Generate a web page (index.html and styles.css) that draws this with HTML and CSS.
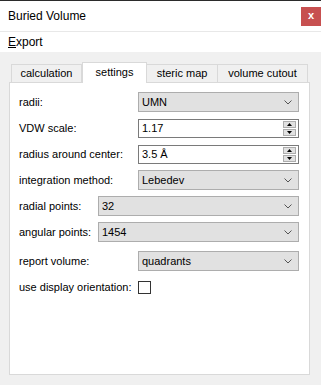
FILE: index.html
```html
<!DOCTYPE html>
<html lang="en">

<head>
    <meta charset="UTF-8">
    <meta name="viewport" content="width=device-width, initial-scale=1.0">
    <link rel="stylesheet" href="styles.css">
</head>

<body>
    <div class="window">
        <div class="titlebar">
            <span class="title">Buried Volume</span>
            <div class="close">x</div>
        </div>
        <div class="menubar">
            <span class="menu"><u>E</u>xport</span>
        </div>
        <div class="main">
            <div class="tabs">
                <div class="tab tab-calc">calculation</div>
                <div class="tab tab-settings active">settings</div>
                <div class="tab tab-steric">steric map</div>
                <div class="tab tab-cutout">volume cutout</div>
            </div>
            <div class="panel">
                <div class="form">
                    <div class="row">
                        <span class="label">radii:</span>
                        <div class="combo"><span>UMN</span>
                            <svg class="chev" width="8" height="5" viewBox="0 0 8 5"><path d="M0.5 0.5 L4 4 L7.5 0.5" fill="none" stroke="#555" stroke-width="1"/></svg>
                        </div>
                    </div>
                    <div class="row">
                        <span class="label">VDW scale:</span>
                        <div class="spin"><span>1.17</span>
                            <div class="spin-btns">
                                <div class="spin-btn"><svg width="7" height="4" viewBox="0 0 7 4"><path d="M0 4 L3.5 0 L7 4 Z" fill="#000"/></svg></div>
                                <div class="spin-btn"><svg width="7" height="4" viewBox="0 0 7 4"><path d="M0 0 L3.5 4 L7 0 Z" fill="#000"/></svg></div>
                            </div>
                        </div>
                    </div>
                    <div class="row">
                        <span class="label">radius around center:</span>
                        <div class="spin"><span>3.5 Å</span>
                            <div class="spin-btns">
                                <div class="spin-btn"><svg width="7" height="4" viewBox="0 0 7 4"><path d="M0 4 L3.5 0 L7 4 Z" fill="#000"/></svg></div>
                                <div class="spin-btn"><svg width="7" height="4" viewBox="0 0 7 4"><path d="M0 0 L3.5 4 L7 0 Z" fill="#000"/></svg></div>
                            </div>
                        </div>
                    </div>
                    <div class="row">
                        <span class="label">integration method:</span>
                        <div class="combo"><span>Lebedev</span>
                            <svg class="chev" width="8" height="5" viewBox="0 0 8 5"><path d="M0.5 0.5 L4 4 L7.5 0.5" fill="none" stroke="#555" stroke-width="1"/></svg>
                        </div>
                    </div>
                    <div class="row">
                        <span class="label short">radial points:</span>
                        <div class="combo"><span>32</span>
                            <svg class="chev" width="8" height="5" viewBox="0 0 8 5"><path d="M0.5 0.5 L4 4 L7.5 0.5" fill="none" stroke="#555" stroke-width="1"/></svg>
                        </div>
                    </div>
                    <div class="row">
                        <span class="label short">angular points:</span>
                        <div class="combo"><span>1454</span>
                            <svg class="chev" width="8" height="5" viewBox="0 0 8 5"><path d="M0.5 0.5 L4 4 L7.5 0.5" fill="none" stroke="#555" stroke-width="1"/></svg>
                        </div>
                    </div>
                    <div class="row spaced">
                        <span class="label">report volume:</span>
                        <div class="combo"><span>quadrants</span>
                            <svg class="chev" width="8" height="5" viewBox="0 0 8 5"><path d="M0.5 0.5 L4 4 L7.5 0.5" fill="none" stroke="#555" stroke-width="1"/></svg>
                        </div>
                    </div>
                    <div class="row">
                        <span class="label">use display orientation:</span>
                        <div class="check"></div>
                    </div>
                </div>
            </div>
        </div>
    </div>
</body>

</html>
```

FILE: styles.css
```css
body {
    margin: 0;
    font-family: "Liberation Sans", Arial, sans-serif;
    font-size: 11px;
    color: #000;
}

.window {
    width: 321px;
    height: 385px;
    background-color: #f0f0f0;
    border-top: 1px solid #2b2b2b;
    box-sizing: border-box;
}

.titlebar {
    height: 30px;
    background-color: #fff;
    display: flex;
    align-items: center;
    justify-content: space-between;
    padding-left: 8px;
    border-bottom: 1px solid #e8e8e8;
}

.title {
    font-size: 12px;
}

.close {
    width: 20px;
    height: 19px;
    background-color: #c75050;
    color: #fff;
    font-weight: bold;
    font-size: 11px;
    display: flex;
    align-items: center;
    justify-content: center;
    line-height: 1;
    padding-bottom: 2px;
    box-sizing: border-box;
}

.menubar {
    height: 20px;
    background-color: #fff;
    display: flex;
    align-items: center;
    padding-left: 8px;
    font-size: 12px;
}

.menu u {
    text-decoration-thickness: 1px;
}

.main {
    padding: 10px 0 0 9px;
}

.tabs {
    display: flex;
    align-items: flex-end;
    height: 20px;
    padding-left: 2px;
}

.tab {
    height: 18px;
    box-sizing: border-box;
    border: 1px solid #d9d9d9;
    border-bottom: none;
    background-color: #f0f0f0;
    display: flex;
    align-items: center;
    justify-content: center;
    padding-bottom: 1px;
    white-space: nowrap;
}

.tab-calc {
    width: 71px;
}

.tab-settings {
    width: 65px;
}

.tab-steric {
    width: 71px;
    border-left: none;
}

.tab-cutout {
    width: 90px;
    border-left: none;
}

.tab.active {
    height: 21px;
    margin-bottom: -1px;
    background-color: #fff;
    position: relative;
    z-index: 1;
    padding-bottom: 3px;
}

.panel {
    width: 301px;
    height: 293px;
    box-sizing: border-box;
    border: 1px solid #d9d9d9;
    background-color: #fff;
}

.form {
    display: flex;
    flex-direction: column;
    gap: 6px;
    padding: 9px 10px 0 9px;
}

.row {
    display: flex;
    align-items: center;
    height: 20px;
}

.row.spaced {
    margin-top: 3px;
}

.label {
    width: 119px;
    flex-shrink: 0;
    white-space: nowrap;
}

.label.short {
    width: 79px;
}

.combo {
    flex: 1;
    height: 20px;
    box-sizing: border-box;
    border: 1px solid #adadad;
    background-color: #e1e1e1;
    display: flex;
    align-items: center;
    justify-content: space-between;
    padding: 0 6px 0 3px;
}

.spin {
    flex: 1;
    height: 19px;
    box-sizing: border-box;
    border: 1px solid #7a7a7a;
    background-color: #fff;
    display: flex;
    align-items: center;
    justify-content: space-between;
    padding: 0 2px 0 3px;
}

.spin-btns {
    display: flex;
    flex-direction: column;
    gap: 1px;
}

.spin-btn {
    width: 13px;
    height: 7px;
    box-sizing: border-box;
    border: 1px solid #adadad;
    background-color: #e1e1e1;
    display: flex;
    align-items: center;
    justify-content: center;
}

.spin-btn svg {
    display: block;
    width: 5px;
    height: 3px;
}

.check {
    width: 13px;
    height: 13px;
    box-sizing: border-box;
    border: 1px solid #333;
    background-color: #fff;
}
```
